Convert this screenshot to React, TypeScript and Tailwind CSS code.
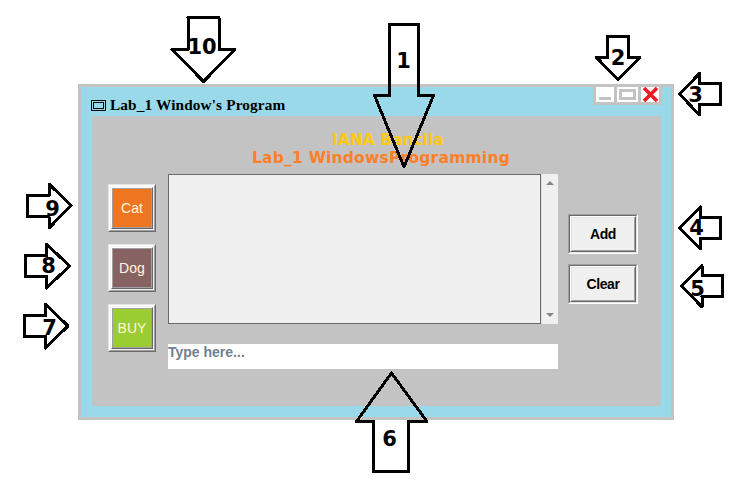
const arrows = [
  { n: '10', x: 202, y: 54, d: 'M188 17.5H219V49.5H235L203.5 81.5L172 49.5H188Z' },
  { n: '1', x: 403.5, y: 67.5, d: 'M389.5 24.5H418.5V95.5H433.5L404 167L374.5 95.5H389.5Z' },
  { n: '2', x: 618, y: 65, d: 'M607.5 36.5H628.5V57.5H640L618 79.5L596.5 57.5H607.5Z' },
  { n: '3', x: 695.5, y: 102, d: 'M679.5 94L699.5 73.5V83.5H720.5V104.5H699.5V115Z' },
  { n: '4', x: 696.5, y: 235, d: 'M679.5 228L700.5 207V217.5H720.5V238.5H700.5V249Z' },
  { n: '5', x: 697.5, y: 296, d: 'M681.5 286L702 265.5V275.5H722.5V296.5H702V307Z' },
  { n: '6', x: 389.5, y: 446, d: 'M391.5 373L427 421.5H408.5V471.5H373.5V421.5H356.5Z' },
  { n: '7', x: 49.5, y: 335, d: 'M24.5 315.5H45.5V304L68 326L45.5 348V336.5H24.5Z' },
  { n: '8', x: 48.5, y: 273, d: 'M25.5 255.5H46.5V244L69.5 266L46.5 288V276.5H25.5Z' },
  { n: '9', x: 52.5, y: 215.5, d: 'M27.5 195.5H49V184L71 205.5L49 228V216.5H27.5Z' },
];

function Annotations() {
  return (
    <svg className="pointer-events-none absolute inset-0" width="751" height="482" viewBox="0 0 751 482">
      {arrows.map((a) => (
        <g key={a.n}>
          <path d={a.d} fill="none" stroke="#000" strokeWidth="3" strokeLinejoin="round" shapeRendering="crispEdges" />
          <text x={a.x} y={a.y} textAnchor="middle" className="font-['DejaVu_Sans',sans-serif] text-[21px] font-bold">
            {a.n}
          </text>
        </g>
      ))}
    </svg>
  );
}

function Tile({ label, color }: { label: string; color: string }) {
  return (
    <button className="h-12 w-12 border border-t-[#e3e3e3] border-l-[#e3e3e3] border-r-[#696969] border-b-[#696969]">
      <span className="block h-full w-full border border-t-white border-l-white border-r-[#a0a0a0] border-b-[#a0a0a0]">
        <span className="block h-full w-full border border-[#f0f0f0]">
          <span className="block h-full w-full border border-t-white border-l-white border-r-[#696969] border-b-[#696969]">
            <span className={`flex h-full w-full items-center justify-center border border-[#a0a0a0] text-[14px] tracking-[0.1px] text-[#fff8dc] ${color}`}>
              {label}
            </span>
          </span>
        </span>
      </span>
    </button>
  );
}

function PushButton({ label }: { label: string }) {
  return (
    <button className="h-10 w-[70px] border border-t-[#a0a0a0] border-l-[#a0a0a0] border-r-white border-b-white">
      <span className="block h-full w-full border border-t-[#696969] border-l-[#696969] border-r-[#e3e3e3] border-b-[#e3e3e3]">
        <span className="block h-full w-full border border-t-white border-l-white border-r-[#696969] border-b-[#696969]">
          <span className="flex h-full w-full items-center justify-center border border-t-[#e3e3e3] border-l-[#e3e3e3] border-r-[#a0a0a0] border-b-[#a0a0a0] bg-[#f0f0f0] text-[14px] font-bold tracking-[-0.4px] text-black">
            {label}
          </span>
        </span>
      </span>
    </button>
  );
}

function TitleBar() {
  return (
    <header className="flex h-[29px] justify-between">
      <div className="flex items-start pl-[10px]">
        <span className="mt-[13px] h-[11px] w-[15px] border border-black p-px">
          <span className="block h-full w-full border border-black" />
        </span>
        <h1 className="mt-[9px] ml-1 font-['Liberation_Serif',serif] text-[15.3px] leading-[18px] font-bold tracking-[0.13px] whitespace-nowrap text-black">
          Lab_1 Window's Program
        </h1>
      </div>
      <div className="mr-[9px] flex h-[18px] gap-[3px] border-x-[3px] border-b-[3px] border-[#c3c3c3] bg-[#c3c3c3]">
        <span className="w-[18px] bg-white pt-[10px] pl-[3px]">
          <span className="block h-[3px] w-3 bg-[#c3c3c3]" />
        </span>
        <span className="w-[21px] bg-white pt-[2px] pl-[2px]">
          <span className="block h-[11px] w-[17px] border-[3px] border-[#c3c3c3]" />
        </span>
        <span className="w-[18px] bg-white">
          <svg width="18" height="15" viewBox="0 0 18 15">
            <path d="M3 1L16 14M16 1L3 14" stroke="#ed1c24" strokeWidth="3.6" />
          </svg>
        </span>
      </div>
    </header>
  );
}

export default function App() {
  return (
    <div className="relative h-[482px] w-[751px] overflow-hidden bg-white pt-[84px] pl-[78px] font-['Liberation_Sans',Arial,sans-serif]">
      <main className="h-[336px] w-[596px] border-[3px] border-[#c3c3c3] bg-[#99d9ea]">
        <TitleBar />
        <section className="ml-[11px] h-[290px] w-[569px] bg-[#c3c3c3] pt-[15px]">
          <div className="h-[43px] font-['DejaVu_Sans',sans-serif] text-[15.5px] leading-[18px] font-bold whitespace-nowrap">
            <p className="pl-[240px] text-[#ffc90e]">IANA Bancila</p>
            <p className="pl-[160px] tracking-[0.22px] text-[#ff7f27]">Lab_1 WindowsProgramming</p>
          </div>
          <div className="flex pl-4">
            <div className="mt-[10px] flex w-[60px] flex-col gap-3">
              <Tile label="Cat" color="bg-[#ee7621]" />
              <Tile label="Dog" color="bg-[#876262]" />
              <Tile label="BUY" color="bg-[#9acd32]" />
            </div>
            <div className="w-[390px]">
              <div className="flex h-[150px]">
                <div className="w-[373px] border border-[#696969] bg-[#f0f0f0]" />
                <div className="flex w-[17px] flex-col items-center justify-between border-l border-[#e3e3e3] bg-[#f0f0f0] py-[7px]">
                  <svg width="8" height="4" viewBox="0 0 8 4"><path d="M0 4L4 0L8 4Z" fill="#858585" /></svg>
                  <svg width="8" height="4" viewBox="0 0 8 4"><path d="M0 0L4 4L8 0Z" fill="#858585" /></svg>
                </div>
              </div>
              <div className="mt-5 h-[25px] bg-white text-[14px] leading-[17px] font-bold text-[#708090]">
                Type here...
              </div>
            </div>
            <div className="mt-10 ml-[10px] flex flex-col gap-[10px]">
              <PushButton label="Add" />
              <PushButton label="Clear" />
            </div>
          </div>
        </section>
      </main>
      <Annotations />
    </div>
  );
}
